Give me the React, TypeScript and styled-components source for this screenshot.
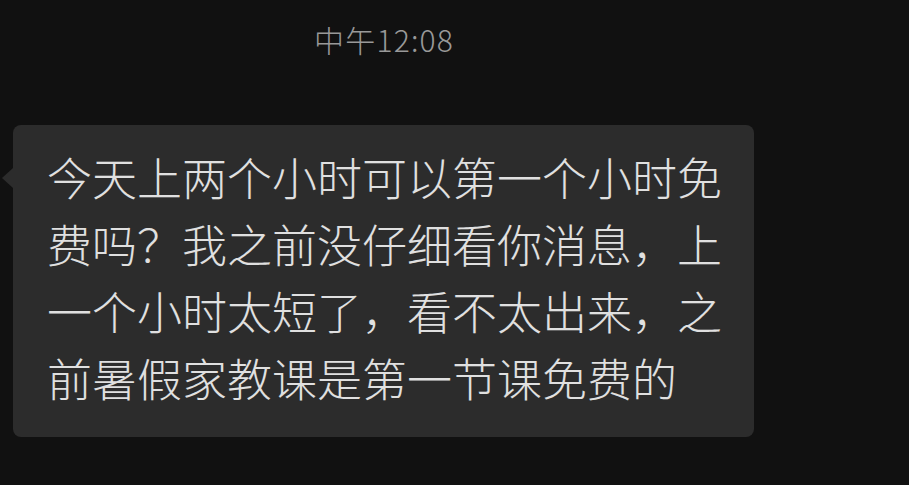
import * as React from 'react';
import styled, { createGlobalStyle } from 'styled-components';

const GlobalStyle = createGlobalStyle`
  html, body {
    margin: 0;
    padding: 0;
    background: #111111;
  }
  body {
    font-family: "Noto Sans CJK SC", "Noto Sans", sans-serif;
  }
`;

export const Screen = styled.div`
  width: 909px;
  height: 485px;
  overflow: hidden;
  background: #111111;
  display: flex;
  flex-direction: column;
`;

export const TimeRow = styled.div`
  display: flex;
  padding: 19px 0 0 314px;
  height: 40px;
`;

export const Time = styled.span`
  font-size: 30px;
  line-height: 40px;
  font-weight: 300;
  color: #999999;
  letter-spacing: 1.2px;
`;

export const MessageRow = styled.div`
  display: flex;
  padding: 66px 0 0 13px;
`;

export const Bubble = styled.div`
  position: relative;
  width: 675px;
  padding: 18px 32px 26px 34px;
  background: #2c2c2c;
  border-radius: 8px;
  color: #e0e0e0;
  font-size: 45px;
  font-weight: 300;
  line-height: 67px;
  &::before {
    content: '';
    position: absolute;
    left: -11px;
    top: 43px;
    border-style: solid;
    border-width: 10px 11px 10px 0;
    border-color: transparent #2c2c2c transparent transparent;
  }
`;

const message =
  '今天上两个小时可以第一个小时免费吗？我之前没仔细看你消息，上一个小时太短了，看不太出来，之前暑假家教课是第一节课免费的';

export default function App() {
  return (
    <Screen>
      <GlobalStyle />
      <TimeRow>
        <Time>中午12:08</Time>
      </TimeRow>
      <MessageRow>
        <Bubble>{message}</Bubble>
      </MessageRow>
    </Screen>
  );
}
